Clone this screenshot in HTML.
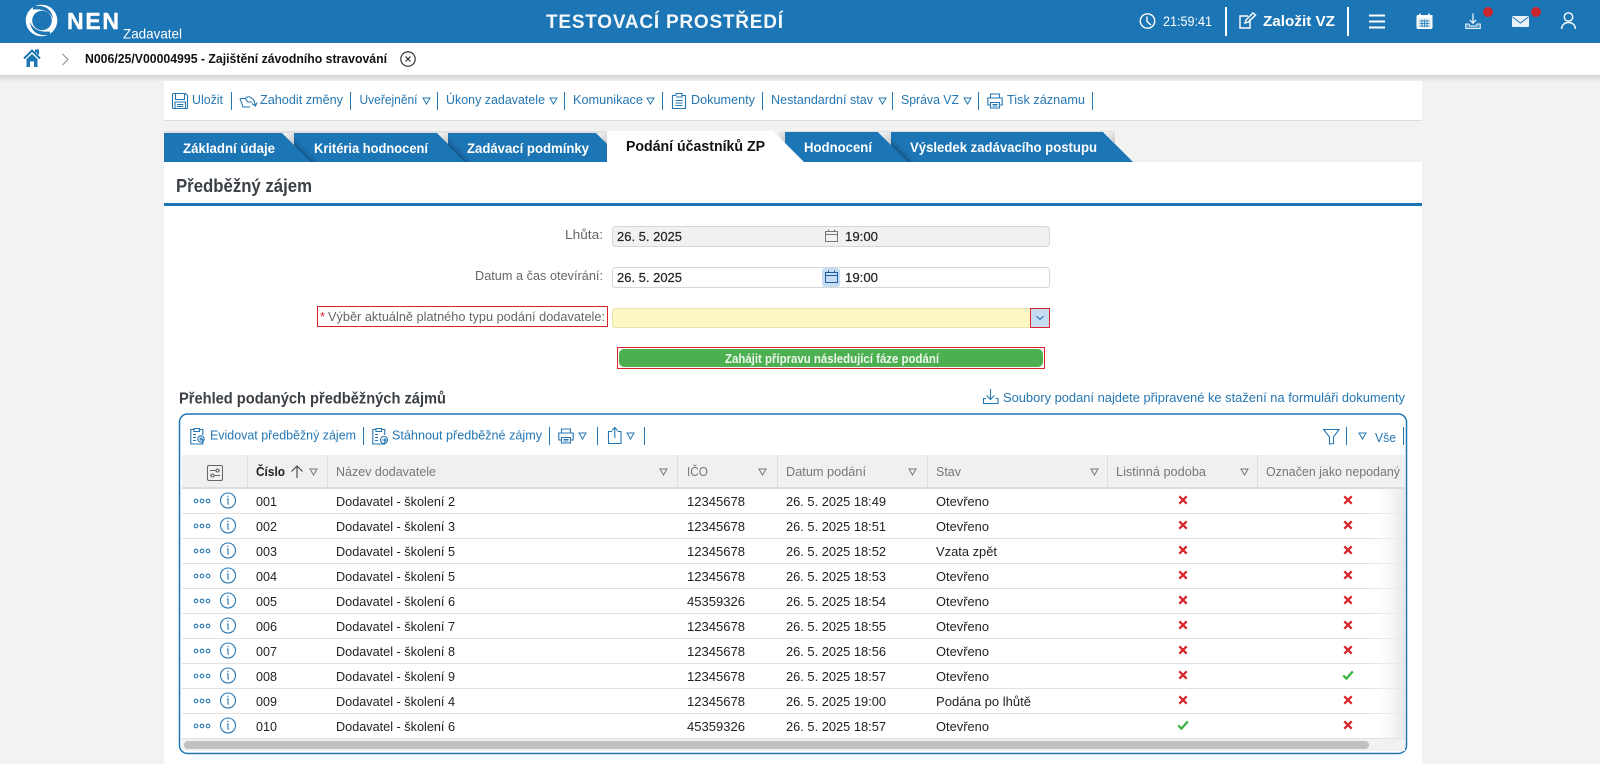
<!DOCTYPE html>
<html lang="cs"><head><meta charset="utf-8"><title>NEN</title>
<style>
html,body{margin:0;padding:0;background:#f2f2f2;overflow:hidden}
svg{display:block;font-family:"Liberation Sans",Arial,sans-serif}
.b{font-weight:bold}
.tb{font-size:13px;fill:#2577b3}
.c{font-size:13px;fill:#222}
.h{font-size:13px;fill:#777}
.l{font-size:13px;fill:#666}
.ic{fill:none;stroke:#2577b3;stroke-width:1.1}
.w{fill:none;stroke:#fff;stroke-width:1.4}
.tabt{font-size:14px;font-weight:bold;fill:#fff}
</style></head><body>
<svg width="1600" height="764" viewBox="0 0 1600 764" xmlns="http://www.w3.org/2000/svg">
<defs>
<linearGradient id="sh" x1="0" y1="0" x2="0" y2="1"><stop offset="0" stop-color="#d4d4d4"/><stop offset="1" stop-color="#f2f2f2"/></linearGradient>
<linearGradient id="fold" x1="0" y1="0" x2="1" y2="1"><stop offset="0" stop-color="#fafafa"/><stop offset="1" stop-color="#c8c8c8"/></linearGradient>
<linearGradient id="fade" x1="0" y1="0" x2="1" y2="0"><stop offset="0" stop-color="#fff" stop-opacity="0"/><stop offset="1" stop-color="#e6e6e6"/></linearGradient>
<g id="tri"><path d="M0 0H7L3.5 6Z" fill="none" stroke="#2577b3" stroke-width="1"/></g>
<g id="trig"><path d="M0 0H7L3.5 6Z" fill="none" stroke="#777" stroke-width="1"/></g>
<g id="x"><path d="M-3.7 -3.7L3.7 3.7M3.7 -3.7L-3.7 3.7" stroke="#d8232a" stroke-width="2.2" fill="none"/></g>
<g id="ok"><path d="M-4.8 0.5L-1.6 3.6L4.8 -3.6" stroke="#37b23e" stroke-width="2.2" fill="none"/></g>
<g id="act">
<circle cx="196" cy="501" r="1.800" class="ic"/><circle cx="202" cy="501" r="1.800" class="ic"/><circle cx="208" cy="501" r="1.800" class="ic"/>
<circle cx="228" cy="500.5" r="7.5" class="ic"/><path d="M227.800 495.800v1.300M226.800 499h1.200v4.200q0 1 1 1" class="ic"/>
</g>
<g id="prn" class="ic"><path d="M3.5 5V1h9v4M3.5 12H.8V5h14.4v7h-2.7M3.5 9.5h9V15h-9ZM5.5 11.5h5M5.5 13h5"/></g>
<g id="clip" class="ic"><path d="M4 2.5H.8V17h12V12M9.500 2.500H12.800V8M4 1.500h5.500v3H4ZM3 7.500h3M3 10.500h3M3 13.500h3"/></g>
<g id="tabsh">
<polygon points="0,12 17,29 25,29 0,4" fill="#1b6eaa"/>
<polygon points="0,12 17,29 21,29 0,8" fill="#18649c"/>
<polygon points="0,12 17,29 19,29 0,10" fill="#145788"/>
</g>
</defs>

<rect width="1600" height="764" fill="#f2f2f2"/>
<rect y="75" width="1600" height="7" fill="url(#sh)"/>
<!-- header -->
<rect width="1600" height="43" fill="#1c75b5"/>
<rect y="43" width="1600" height="32" fill="#fff"/>
<circle cx="41.500" cy="20.500" r="15.800" fill="#fff"/>
<circle cx="42" cy="20.500" r="9.800" fill="#1c75b5"/>
<path d="M33 6.500C44 4 52 9 53 19C50 12 44 8.500 33 9.500Z" fill="#1c75b5"/>
<path d="M50 34.500C39 37 31 32 30 22C33 29 39 32.500 50 31.500Z" fill="#1c75b5"/>
<text x="67" y="29" font-size="23" class="b" fill="#fff" stroke="#fff" stroke-width=".4" textLength="52" lengthAdjust="spacing">NEN</text>
<text x="123" y="38.500" font-size="14" fill="#fff" textLength="59" lengthAdjust="spacingAndGlyphs">Zadavatel</text>
<text x="546" y="28" font-size="19" class="b" fill="#f4f8fb" textLength="237" lengthAdjust="spacing">TESTOVACÍ PROSTŘEDÍ</text>
<circle cx="1147.500" cy="21" r="7.200" class="w"/><path d="M1147 16.500V21.500L1151 25" class="w"/>
<text x="1163" y="26" font-size="13.500" fill="#fff" textLength="49" lengthAdjust="spacingAndGlyphs">21:59:41</text>
<rect x="1225" y="7" width="2" height="29" fill="#fff"/>
<path d="M1250 19V28H1240V16H1248M1245 23L1246 20L1253 13L1255.500 15L1248.500 22Z" class="w"/>
<text x="1263" y="26" font-size="15" class="b" fill="#fff" textLength="72" lengthAdjust="spacingAndGlyphs">Založit VZ</text>
<rect x="1347" y="7" width="2" height="29" fill="#fff"/>
<path d="M1369 15.500H1385M1369 21.500H1385M1369 27.500H1385" stroke="#fff" stroke-width="2" fill="none"/>
<rect x="1417" y="16" width="15" height="12.500" rx="1" fill="#e7f1f8" stroke="#fff"/>
<rect x="1417" y="15" width="15.500" height="3" fill="#fff"/>
<path d="M1420 13.500v3M1429 13.500v3" stroke="#fff" stroke-width="1.500"/>
<path d="M1419.500 21h10M1419.500 23.500h10M1419.500 26h10M1422 19.500v7.500M1424.500 19.500v7.500M1427 19.500v7.500" stroke="#1c75b5" stroke-width=".8"/>
<path d="M1473 13.500V23M1469.800 20L1473 23.200L1476.200 20" fill="none" stroke="#fff" stroke-width="1.200"/>
<path d="M1465.700 24H1469L1470 26H1476L1477 24H1480.300V28.500H1465.700Z" fill="#5e9fcf" stroke="#e6f0f8"/>
<circle cx="1488" cy="12" r="5" fill="#c9252b"/>
<rect x="1512" y="16" width="17" height="11" rx="1" fill="#e9f2f9"/><path d="M1512.500 17L1520.500 23L1528.500 17" fill="none" stroke="#1c75b5"/>
<circle cx="1536" cy="12" r="5" fill="#c9252b"/>
<circle cx="1568.500" cy="17" r="4.200" class="w"/><path d="M1561.500 29C1562 24.500 1565 22.500 1568.500 22.500C1572 22.500 1575 24.500 1575.500 29" class="w"/>

<path d="M24 58.500L32 50.500L40 58.500M36 52.500V50.500H38V54.500" fill="none" stroke="#1c75b5" stroke-width="2"/>
<path d="M26.500 59L32 54L37.500 59V67H34V61.500H30V67H26.500Z" fill="#1c75b5"/>
<path d="M62.500 54L68 59.500L62.500 65" fill="none" stroke="#8a8a8a"/>
<text x="85" y="63" font-size="12.500" class="b" fill="#111" textLength="302" lengthAdjust="spacingAndGlyphs">N006/25/V00004995 - Zajištění závodního stravování</text>
<circle cx="408" cy="59" r="7.200" fill="none" stroke="#222" stroke-width="1.100"/><path d="M405.500 56.500L410.500 61.500M410.500 56.500L405.500 61.500" stroke="#222" stroke-width="1.100"/>

<!-- toolbar -->
<rect x="164" y="81" width="1258" height="39" fill="#fff"/>
<rect x="164" y="120" width="1258" height="1" fill="#dcdcdc"/>
<g class="ic"><path d="M174 93.500H185.500L187.500 95.500V107.500Q187.500 108.500 186.500 108.500H173.500Q172.500 108.500 172.500 107.500V95Q172.500 93.500 174 93.500ZM175.500 93.500V99.500H184.500V93.500M175 108.500V102H185.500V108.500M177 104.500H183.500M177 106.500H183.500"/></g>
<text x="192" y="104" class="tb" textLength="31" lengthAdjust="spacingAndGlyphs">Uložit</text>
<rect x="231" y="92" width="1" height="18" fill="#2577b3"/>
<path class="ic" d="M240 98.500L243 107H250M240 98.500H245C248 95.500 251 96.500 254 100.500L255.500 105.500M252 103.500L255.500 106L257 102.500M245 98.500L248 102H252"/>
<text x="260" y="104" class="tb" textLength="83" lengthAdjust="spacingAndGlyphs">Zahodit změny</text>
<rect x="350" y="92" width="1" height="18" fill="#2577b3"/>
<text x="359.500" y="104" class="tb" textLength="58" lengthAdjust="spacingAndGlyphs">Uveřejnění</text><use href="#tri" x="423" y="98"/>
<rect x="437" y="92" width="1" height="18" fill="#2577b3"/>
<text x="446" y="104" class="tb" textLength="99" lengthAdjust="spacingAndGlyphs">Úkony zadavatele</text><use href="#tri" x="550" y="98"/>
<rect x="564" y="92" width="1" height="18" fill="#2577b3"/>
<text x="573" y="104" class="tb" textLength="70" lengthAdjust="spacingAndGlyphs">Komunikace</text><use href="#tri" x="647" y="98"/>
<rect x="662" y="92" width="1" height="18" fill="#2577b3"/>
<path class="ic" d="M676 95.500H672.500V108.500H685.500V95.500H682M676 95.500V93.500H682V97H676M675.500 100.500H682.500M675.500 103H682.500M675.500 105.500H682.500"/>
<text x="691" y="104" class="tb" textLength="64" lengthAdjust="spacingAndGlyphs">Dokumenty</text>
<rect x="762" y="92" width="1" height="18" fill="#2577b3"/>
<text x="771" y="104" class="tb" textLength="102" lengthAdjust="spacingAndGlyphs">Nestandardní stav</text><use href="#tri" x="879" y="98"/>
<rect x="892" y="92" width="1" height="18" fill="#2577b3"/>
<text x="901" y="104" class="tb" textLength="58" lengthAdjust="spacingAndGlyphs">Správa VZ</text><use href="#tri" x="964" y="98"/>
<rect x="978" y="92" width="1" height="18" fill="#2577b3"/>
<use href="#prn" x="987" y="93"/>
<text x="1007" y="104" class="tb" textLength="78" lengthAdjust="spacingAndGlyphs">Tisk záznamu</text>
<rect x="1092" y="92" width="1" height="18" fill="#2577b3"/>

<!-- tabs -->
<rect x="164" y="131" width="951" height="2" fill="#e0e0e0"/>
<polygon points="164,133 607,133 607,162 164,162" fill="#1c75b5"/>
<polygon points="282,133 294,133 294,145" fill="url(#fold)"/>
<polygon points="437,133 448,133 448,144" fill="url(#fold)"/>
<polygon points="596,133 607,133 607,144" fill="url(#fold)"/>
<use href="#tabsh" x="294" y="133"/>
<use href="#tabsh" x="448" y="133"/>
<polygon points="785,132 878,132 908,162 803,162 785,144" fill="#1c75b5"/>
<polygon points="891,132 1103,132 1133,162 908,162 891,145" fill="#1c75b5"/>
<polygon points="773,131 785,131 785,143" fill="url(#fold)"/>
<polygon points="878,132 891,132 891,145" fill="url(#fold)"/>
<polygon points="1103,132 1115,132 1115,144" fill="url(#fold)"/>
<use href="#tabsh" x="891" y="133"/>
<polygon points="607,131 773,131 804,162 607,162" fill="#fff"/>
<text x="183" y="153" class="tabt" textLength="92" lengthAdjust="spacingAndGlyphs">Základní údaje</text>
<text x="314" y="153" class="tabt" textLength="114" lengthAdjust="spacingAndGlyphs">Kritéria hodnocení</text>
<text x="467" y="153" class="tabt" textLength="122" lengthAdjust="spacingAndGlyphs">Zadávací podmínky</text>
<text x="626" y="151" font-size="14.500" class="b" fill="#111" textLength="139" lengthAdjust="spacingAndGlyphs">Podání účastníků ZP</text>
<text x="804" y="152" class="tabt" textLength="68" lengthAdjust="spacingAndGlyphs">Hodnocení</text>
<text x="910" y="152" class="tabt" textLength="187" lengthAdjust="spacingAndGlyphs">Výsledek zadávacího postupu</text>

<!-- panel -->
<rect x="164" y="162" width="1258" height="602" fill="#fff"/>
<text x="176" y="192" font-size="18" class="b" fill="#3a4046" textLength="136" lengthAdjust="spacingAndGlyphs">Předběžný zájem</text>
<rect x="164" y="203" width="1258" height="3" fill="#1c75b5"/>

<!-- form -->
<text x="565" y="239" class="l" textLength="38" lengthAdjust="spacingAndGlyphs">Lhůta:</text>
<rect x="612.500" y="226.500" width="437" height="20" rx="3" fill="#f1f1f1" stroke="#d6d6d6"/>
<text x="617" y="241" font-size="13" fill="#222" textLength="65" lengthAdjust="spacingAndGlyphs" style="stroke:#222;stroke-width:.2">26. 5. 2025</text>
<path d="M825.500 231.500H837.500V241.500H825.500ZM825.500 234.500H837.500M828.500 229.500V232M834.500 229.500V232" fill="none" stroke="#777"/>
<text x="845" y="241" font-size="13" fill="#222" textLength="33" lengthAdjust="spacingAndGlyphs" style="stroke:#222;stroke-width:.2">19:00</text>

<text x="475" y="280" class="l" textLength="128" lengthAdjust="spacingAndGlyphs">Datum a čas otevírání:</text>
<rect x="612.500" y="267.500" width="437" height="20" rx="3" fill="#fff" stroke="#d6d6d6"/>
<text x="617" y="282" font-size="13" fill="#222" textLength="65" lengthAdjust="spacingAndGlyphs" style="stroke:#222;stroke-width:.2">26. 5. 2025</text>
<rect x="822" y="268" width="18" height="19" rx="3" fill="#c5dcf2"/>
<path d="M825.500 272.500H837.500V282.500H825.500ZM825.500 275.500H837.500M828.500 270.500V273M834.500 270.500V273" fill="none" stroke="#1c5fa5"/>
<text x="845" y="282" font-size="13" fill="#222" textLength="33" lengthAdjust="spacingAndGlyphs" style="stroke:#222;stroke-width:.2">19:00</text>

<rect x="317.500" y="306.500" width="290" height="20" fill="#fff" stroke="#d8232a"/>
<text x="320" y="321" font-size="13" fill="#d8232a">*</text>
<text x="328" y="321" class="l" textLength="277" lengthAdjust="spacingAndGlyphs">Výběr aktuálně platného typu podání dodavatele:</text>
<rect x="612.500" y="308.500" width="437" height="19" rx="3" fill="#fdf8c2" stroke="#e8e2ae"/>
<rect x="1030.500" y="308.500" width="19" height="19" fill="#c5dcf2" stroke="#d8232a"/>
<path d="M1036.500 316L1040 319.500L1043.500 316" fill="none" stroke="#2b6cb0"/>

<rect x="617.500" y="347.500" width="427" height="21" fill="#fff" stroke="#d8232a"/>
<rect x="619" y="349" width="424" height="18" rx="5" fill="#4caf50"/>
<text x="725" y="363" font-size="12.500" class="b" fill="#eef7ee" textLength="214" lengthAdjust="spacingAndGlyphs">Zahájit přípravu následující fáze podání</text>

<!-- section -->
<text x="179" y="403.500" font-size="15.500" class="b" fill="#3a4046" textLength="267" lengthAdjust="spacingAndGlyphs">Přehled podaných předběžných zájmů</text>
<path class="ic" d="M990.500 389V399M986.500 395.500L990.500 399.500L994.500 395.500M986 398.500H983.500V403.500H998V398.500H995.500"/>
<text x="1003" y="402" class="tb" font-size="13.500" textLength="402" lengthAdjust="spacingAndGlyphs">Soubory podaní najdete připravené ke stažení na formuláři dokumenty</text>

<!-- table box -->
<rect x="179.500" y="414" width="1227" height="339.500" rx="8" fill="#fff" stroke="#1c75b5" stroke-width="1.500"/>
<use href="#clip" x="190" y="427"/><circle cx="201" cy="439" r="3.200" class="ic"/><circle cx="201" cy="439" r="1" class="ic"/>
<text x="210" y="439.500" class="tb" textLength="146" lengthAdjust="spacingAndGlyphs">Evidovat předběžný zájem</text>
<rect x="363" y="427" width="1" height="18" fill="#2577b3"/>
<use href="#clip" x="372" y="427"/><circle cx="384" cy="440" r="3.500" class="ic"/><path class="ic" d="M382 440h4M384.500 438.500L386 440L384.500 441.500"/>
<text x="392" y="439.500" class="tb" textLength="150" lengthAdjust="spacingAndGlyphs">Stáhnout předběžné zájmy</text>
<rect x="549" y="427" width="1" height="18" fill="#2577b3"/>
<use href="#prn" x="558" y="428"/><use href="#tri" x="579" y="433"/>
<rect x="597" y="427" width="1" height="18" fill="#2577b3"/>
<path class="ic" d="M612 431.500H608.500V443.500H621V431.500H617.500M614.800 438V428M612 430.500L614.800 427.500L617.500 430.500"/><use href="#tri" x="627" y="433"/>
<rect x="644" y="427" width="1" height="18" fill="#2577b3"/>
<path class="ic" d="M1323.500 429.500H1339L1333.500 437V443.500L1329.500 444V437Z"/>
<rect x="1346" y="427" width="1" height="18" fill="#2577b3"/>
<use href="#tri" x="1359" y="433"/>
<text x="1375" y="442" class="tb" textLength="21" lengthAdjust="spacingAndGlyphs">Vše</text>
<rect x="1403" y="427" width="1" height="18" fill="#2577b3"/>

<!-- table head -->
<rect x="182" y="455" width="1223" height="33" fill="#f0f0f0"/>
<rect x="182" y="487" width="1223" height="2" fill="#dcdcdc"/>
<g fill="#dcdcdc"><rect x="247" y="455" width="1" height="33"/><rect x="327" y="455" width="1" height="33"/><rect x="677" y="455" width="1" height="33"/><rect x="777" y="455" width="1" height="33"/><rect x="927" y="455" width="1" height="33"/><rect x="1107" y="455" width="1" height="33"/><rect x="1257" y="455" width="1" height="33"/></g>
<rect x="207.500" y="465.500" width="15" height="15" rx="1.500" fill="none" stroke="#666"/>
<path d="M210 470.500H216M220 470.500H219M210 475.500H211M214.500 475.500H220" fill="none" stroke="#666"/><circle cx="217.500" cy="470.500" r="1.500" fill="none" stroke="#666"/><circle cx="212.500" cy="475.500" r="1.500" fill="none" stroke="#666"/>
<text x="256" y="476" font-size="13" class="b" fill="#222" textLength="29" lengthAdjust="spacingAndGlyphs">Číslo</text>
<path d="M297 478V466M291.500 471.500L297 466L302.500 471.500" fill="none" stroke="#444" stroke-width="1.100"/>
<use href="#trig" x="310" y="469"/>
<text x="336" y="476" class="h" textLength="100" lengthAdjust="spacingAndGlyphs">Název dodavatele</text><use href="#trig" x="660" y="469"/>
<text x="687" y="476" class="h" textLength="21" lengthAdjust="spacingAndGlyphs">IČO</text><use href="#trig" x="759" y="469"/>
<text x="786" y="476" class="h" textLength="80" lengthAdjust="spacingAndGlyphs">Datum podání</text><use href="#trig" x="909" y="469"/>
<text x="936" y="476" class="h" textLength="25" lengthAdjust="spacingAndGlyphs">Stav</text><use href="#trig" x="1091" y="469"/>
<text x="1116" y="476" class="h" textLength="90" lengthAdjust="spacingAndGlyphs">Listinná podoba</text><use href="#trig" x="1241" y="469"/>
<text x="1266" y="476" class="h" textLength="134" lengthAdjust="spacingAndGlyphs">Označen jako nepodaný</text>

<!-- rows -->
<g>
<g fill="#e2e2e2"><rect x="182" y="513" width="1223" height="1"/><rect x="182" y="538" width="1223" height="1"/><rect x="182" y="563" width="1223" height="1"/><rect x="182" y="588" width="1223" height="1"/><rect x="182" y="613" width="1223" height="1"/><rect x="182" y="638" width="1223" height="1"/><rect x="182" y="663" width="1223" height="1"/><rect x="182" y="688" width="1223" height="1"/><rect x="182" y="713" width="1223" height="1"/><rect x="182" y="738" width="1223" height="1"/></g>

<g><use href="#act"/><text x="256" y="506" class="c" textLength="21" lengthAdjust="spacingAndGlyphs">001</text><text x="336" y="506" class="c" textLength="119" lengthAdjust="spacingAndGlyphs">Dodavatel - školení 2</text><text x="687" y="506" class="c" textLength="58" lengthAdjust="spacingAndGlyphs">12345678</text><text x="786" y="506" class="c" textLength="100" lengthAdjust="spacingAndGlyphs">26. 5. 2025 18:49</text><text x="936" y="506" class="c" textLength="53" lengthAdjust="spacingAndGlyphs">Otevřeno</text><use href="#x" x="1183" y="500"/><use href="#x" x="1348" y="500"/></g>
<g transform="translate(0,25)"><use href="#act"/><text x="256" y="506" class="c" textLength="21" lengthAdjust="spacingAndGlyphs">002</text><text x="336" y="506" class="c" textLength="119" lengthAdjust="spacingAndGlyphs">Dodavatel - školení 3</text><text x="687" y="506" class="c" textLength="58" lengthAdjust="spacingAndGlyphs">12345678</text><text x="786" y="506" class="c" textLength="100" lengthAdjust="spacingAndGlyphs">26. 5. 2025 18:51</text><text x="936" y="506" class="c" textLength="53" lengthAdjust="spacingAndGlyphs">Otevřeno</text><use href="#x" x="1183" y="500"/><use href="#x" x="1348" y="500"/></g>
<g transform="translate(0,50)"><use href="#act"/><text x="256" y="506" class="c" textLength="21" lengthAdjust="spacingAndGlyphs">003</text><text x="336" y="506" class="c" textLength="119" lengthAdjust="spacingAndGlyphs">Dodavatel - školení 5</text><text x="687" y="506" class="c" textLength="58" lengthAdjust="spacingAndGlyphs">12345678</text><text x="786" y="506" class="c" textLength="100" lengthAdjust="spacingAndGlyphs">26. 5. 2025 18:52</text><text x="936" y="506" class="c" textLength="61" lengthAdjust="spacingAndGlyphs">Vzata zpět</text><use href="#x" x="1183" y="500"/><use href="#x" x="1348" y="500"/></g>
<g transform="translate(0,75)"><use href="#act"/><text x="256" y="506" class="c" textLength="21" lengthAdjust="spacingAndGlyphs">004</text><text x="336" y="506" class="c" textLength="119" lengthAdjust="spacingAndGlyphs">Dodavatel - školení 5</text><text x="687" y="506" class="c" textLength="58" lengthAdjust="spacingAndGlyphs">12345678</text><text x="786" y="506" class="c" textLength="100" lengthAdjust="spacingAndGlyphs">26. 5. 2025 18:53</text><text x="936" y="506" class="c" textLength="53" lengthAdjust="spacingAndGlyphs">Otevřeno</text><use href="#x" x="1183" y="500"/><use href="#x" x="1348" y="500"/></g>
<g transform="translate(0,100)"><use href="#act"/><text x="256" y="506" class="c" textLength="21" lengthAdjust="spacingAndGlyphs">005</text><text x="336" y="506" class="c" textLength="119" lengthAdjust="spacingAndGlyphs">Dodavatel - školení 6</text><text x="687" y="506" class="c" textLength="58" lengthAdjust="spacingAndGlyphs">45359326</text><text x="786" y="506" class="c" textLength="100" lengthAdjust="spacingAndGlyphs">26. 5. 2025 18:54</text><text x="936" y="506" class="c" textLength="53" lengthAdjust="spacingAndGlyphs">Otevřeno</text><use href="#x" x="1183" y="500"/><use href="#x" x="1348" y="500"/></g>
<g transform="translate(0,125)"><use href="#act"/><text x="256" y="506" class="c" textLength="21" lengthAdjust="spacingAndGlyphs">006</text><text x="336" y="506" class="c" textLength="119" lengthAdjust="spacingAndGlyphs">Dodavatel - školení 7</text><text x="687" y="506" class="c" textLength="58" lengthAdjust="spacingAndGlyphs">12345678</text><text x="786" y="506" class="c" textLength="100" lengthAdjust="spacingAndGlyphs">26. 5. 2025 18:55</text><text x="936" y="506" class="c" textLength="53" lengthAdjust="spacingAndGlyphs">Otevřeno</text><use href="#x" x="1183" y="500"/><use href="#x" x="1348" y="500"/></g>
<g transform="translate(0,150)"><use href="#act"/><text x="256" y="506" class="c" textLength="21" lengthAdjust="spacingAndGlyphs">007</text><text x="336" y="506" class="c" textLength="119" lengthAdjust="spacingAndGlyphs">Dodavatel - školení 8</text><text x="687" y="506" class="c" textLength="58" lengthAdjust="spacingAndGlyphs">12345678</text><text x="786" y="506" class="c" textLength="100" lengthAdjust="spacingAndGlyphs">26. 5. 2025 18:56</text><text x="936" y="506" class="c" textLength="53" lengthAdjust="spacingAndGlyphs">Otevřeno</text><use href="#x" x="1183" y="500"/><use href="#x" x="1348" y="500"/></g>
<g transform="translate(0,175)"><use href="#act"/><text x="256" y="506" class="c" textLength="21" lengthAdjust="spacingAndGlyphs">008</text><text x="336" y="506" class="c" textLength="119" lengthAdjust="spacingAndGlyphs">Dodavatel - školení 9</text><text x="687" y="506" class="c" textLength="58" lengthAdjust="spacingAndGlyphs">12345678</text><text x="786" y="506" class="c" textLength="100" lengthAdjust="spacingAndGlyphs">26. 5. 2025 18:57</text><text x="936" y="506" class="c" textLength="53" lengthAdjust="spacingAndGlyphs">Otevřeno</text><use href="#x" x="1183" y="500"/><use href="#ok" x="1348" y="500"/></g>
<g transform="translate(0,200)"><use href="#act"/><text x="256" y="506" class="c" textLength="21" lengthAdjust="spacingAndGlyphs">009</text><text x="336" y="506" class="c" textLength="119" lengthAdjust="spacingAndGlyphs">Dodavatel - školení 4</text><text x="687" y="506" class="c" textLength="58" lengthAdjust="spacingAndGlyphs">12345678</text><text x="786" y="506" class="c" textLength="100" lengthAdjust="spacingAndGlyphs">26. 5. 2025 19:00</text><text x="936" y="506" class="c" textLength="95" lengthAdjust="spacingAndGlyphs">Podána po lhůtě</text><use href="#x" x="1183" y="500"/><use href="#x" x="1348" y="500"/></g>
<g transform="translate(0,225)"><use href="#act"/><text x="256" y="506" class="c" textLength="21" lengthAdjust="spacingAndGlyphs">010</text><text x="336" y="506" class="c" textLength="119" lengthAdjust="spacingAndGlyphs">Dodavatel - školení 6</text><text x="687" y="506" class="c" textLength="58" lengthAdjust="spacingAndGlyphs">45359326</text><text x="786" y="506" class="c" textLength="100" lengthAdjust="spacingAndGlyphs">26. 5. 2025 18:57</text><text x="936" y="506" class="c" textLength="53" lengthAdjust="spacingAndGlyphs">Otevřeno</text><use href="#ok" x="1183" y="500"/><use href="#x" x="1348" y="500"/></g>
</g>
<rect x="1370" y="489" width="35" height="249" fill="url(#fade)"/>
<!-- scrollbar -->
<rect x="182" y="739" width="1223" height="12" fill="#f1f1f1"/>
<rect x="184" y="741" width="1185" height="8" rx="4" fill="#c0c0c0"/>
</svg>
</body></html>
